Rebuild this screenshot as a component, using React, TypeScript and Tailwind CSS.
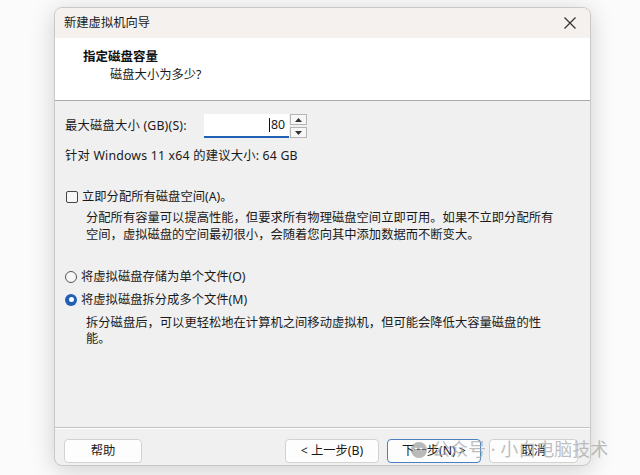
import React from "react";

const font = { fontFamily: '"Noto Sans", "Noto Sans CJK SC", sans-serif' };

function Btn({ children, w, primary }: { children: React.ReactNode; w: string; primary?: boolean }) {
  return (
    <div
      className={`${w} h-[24px] flex items-center justify-center rounded-[4px] bg-[#fdfdfd] text-[12.3px] text-[#1a1a1a] ${
        primary ? "border border-[#4a7fc0]" : "border border-[#d2d2d2]"
      }`}
    >
      {children}
    </div>
  );
}

export default function App() {
  return (
    <div className="w-[640px] h-[475px] bg-[#fbfbfb] pt-[7px] pl-[54px] relative overflow-hidden" style={font}>
      <div className="w-[537px] h-[459px] rounded-[8px] border border-[#c9c9c9] bg-[#f0f0f0] overflow-hidden flex flex-col shadow-[0_4px_24px_rgba(0,0,0,0.18)]">
        {/* title bar */}
        <div className="h-[30px] bg-[#f4f1ef] flex items-center justify-between pl-[9px] pr-[10px] shrink-0">
          <span className="text-[12.3px] text-[#1a1a1a]">新建虚拟机向导</span>
          <svg width="14" height="14" viewBox="0 0 14 14" className="mr-[3px]">
            <path d="M1.5 1.5 L12.5 12.5 M12.5 1.5 L1.5 12.5" stroke="#333" strokeWidth="1.2" />
          </svg>
        </div>
        {/* header */}
        <div className="h-[63px] bg-white border-b border-[#a8a8a8] shrink-0 pl-[28px] pt-[10px]">
          <div className="text-[12.5px] font-bold text-[#111] leading-[18px]">指定磁盘容量</div>
          <div className="text-[12.3px] text-[#1a1a1a] leading-[18px] pl-[27px]">磁盘大小为多少?</div>
        </div>
        {/* body */}
        <div className="flex-1 pl-[10px] pt-[13px] text-[12.3px] text-[#1a1a1a] flex flex-col">
          <div className="flex items-center h-[24px]">
            <span className="w-[139px] tracking-[0.2px]">最大磁盘大小 (GB)(S):</span>
            <div className="w-[85px] h-[24px] bg-white border-b-2 border-[#1f62b5] flex items-center justify-end pr-[4px]">
              <span className="w-px h-[14px] bg-[#111] mr-[1px]"></span>
              <span>80</span>
            </div>
            <div className="flex flex-col ml-[1px] h-[24px] justify-between">
              <div className="w-[17px] h-[11px] border border-[#b5b5b5] bg-[#f7f7f7] flex items-center justify-center">
                <svg width="7" height="4" viewBox="0 0 7 4"><path d="M0 4 L3.5 0 L7 4 Z" fill="#333" /></svg>
              </div>
              <div className="w-[17px] h-[11px] border border-[#b5b5b5] bg-[#f7f7f7] flex items-center justify-center">
                <svg width="7" height="4" viewBox="0 0 7 4"><path d="M0 0 L3.5 4 L7 0 Z" fill="#333" /></svg>
              </div>
            </div>
          </div>
          <div className="mt-[9px] leading-[17px] tracking-[0.2px]">针对 Windows 11 x64 的建议大小: 64 GB</div>

          <div className="mt-[24px] flex items-center leading-[17px]">
            <span className="w-[12px] h-[12px] border border-[#444] rounded-[2px] bg-[#f7f7f7] ml-[1px] mr-[4px]"></span>
            <span>立即分配所有磁盘空间(A)。</span>
          </div>
          <div className="pl-[21px] mt-[4px] leading-[17px] w-[490px]">
            <div>分配所有容量可以提高性能，但要求所有物理磁盘空间立即可用。如果不立即分配所有</div>
            <div>空间，虚拟磁盘的空间最初很小，会随着您向其中添加数据而不断变大。</div>
          </div>

          <div className="mt-[25px] flex items-center leading-[17px]">
            <span className="w-[12px] h-[12px] rounded-full border border-[#555] bg-[#f7f7f7] mr-[4px]"></span>
            <span>将虚拟磁盘存储为单个文件(O)</span>
          </div>
          <div className="mt-[6px] flex items-center leading-[17px]">
            <span className="w-[12px] h-[12px] rounded-full bg-[#1f5fb4] flex items-center justify-center mr-[4px]">
              <span className="w-[5px] h-[5px] rounded-full bg-white"></span>
            </span>
            <span>将虚拟磁盘拆分成多个文件(M)</span>
          </div>
          <div className="pl-[21px] mt-[7px] leading-[16px]">
            <div>拆分磁盘后，可以更轻松地在计算机之间移动虚拟机，但可能会降低大容量磁盘的性</div>
            <div>能。</div>
          </div>
        </div>
        {/* footer */}
        <div className="h-[38px] shrink-0 border-t border-[#c2c2c2] shadow-[inset_0_1px_0_#ffffff] flex items-start pt-[11px] pl-[9px]">
          <Btn w="w-[78px]">帮助</Btn>
          <div className="ml-[143px] flex gap-[8px]">
            <Btn w="w-[94px]">&lt; 上一步(B)</Btn>
            <Btn w="w-[94px]" primary>下一步(N) &gt;</Btn>
            <Btn w="w-[89px]">取消</Btn>
          </div>
        </div>
      </div>
      {/* watermark */}
      <div className="absolute left-[410px] top-[436px] flex items-center gap-[4px] text-[18px] text-[#a8a8a8]/75 pointer-events-none">
        <svg width="18" height="18" viewBox="0 0 18 18" className="opacity-60">
          <circle cx="9" cy="9" r="8" fill="#8d8d8d" />
          <circle cx="6" cy="8" r="1.3" fill="#fff" />
          <circle cx="11" cy="8" r="1.3" fill="#fff" />
        </svg>
        <span>公众号 · 小白电脑技术</span>
      </div>
    </div>
  );
}
